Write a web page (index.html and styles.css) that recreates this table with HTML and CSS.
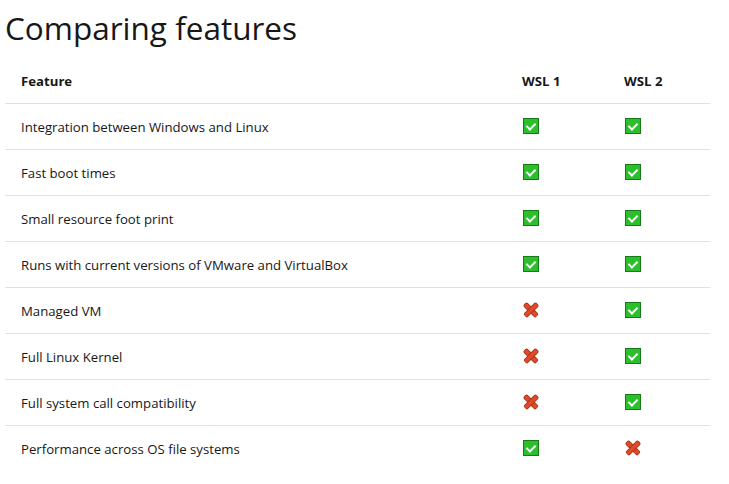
FILE: index.html
```html
<!DOCTYPE html>
<html>
<head>
<meta charset="utf-8">
<link rel="stylesheet" href="styles.css">
</head>
<body>
<h1 class="title">Comparing features</h1>
<table class="compare">
  <colgroup><col class="c-feature"><col class="c-wsl"><col class="c-wsl"></colgroup>
  <thead>
    <tr><th>Feature</th><th>WSL 1</th><th>WSL 2</th></tr>
  </thead>
  <tbody>
    <tr><td>Integration between Windows and Linux</td><td><span class="yes"></span></td><td><span class="yes"></span></td></tr>
    <tr><td>Fast boot times</td><td><span class="yes"></span></td><td><span class="yes"></span></td></tr>
    <tr><td>Small resource foot print</td><td><span class="yes"></span></td><td><span class="yes"></span></td></tr>
    <tr><td>Runs with current versions of VMware and VirtualBox</td><td><span class="yes"></span></td><td><span class="yes"></span></td></tr>
    <tr><td>Managed VM</td><td><span class="no"></span></td><td><span class="yes"></span></td></tr>
    <tr><td>Full Linux Kernel</td><td><span class="no"></span></td><td><span class="yes"></span></td></tr>
    <tr><td>Full system call compatibility</td><td><span class="no"></span></td><td><span class="yes"></span></td></tr>
    <tr><td>Performance across OS file systems</td><td><span class="yes"></span></td><td><span class="no"></span></td></tr>
  </tbody>
</table>
</body>
</html>
```
FILE: styles.css
```css
html, body { background: #ffffff; }
body {
  margin: 0;
  padding: 8px 5px 0 5px;
  font-family: "Open Sans", "Noto Sans", sans-serif;
  color: #171717;
}
.title {
  margin: 0 0 10px 0;
  font-size: 31.5px;
  line-height: 40px;
  font-weight: 400;
}
.compare {
  border-collapse: collapse;
  width: 705px;
  table-layout: fixed;
  font-size: 13.2px;
}
.c-feature { width: 501px; }
.c-wsl { width: 102px; }
.compare th, .compare td {
  text-align: left;
  padding: 0 16px;
  height: 45px;
  vertical-align: middle;
}
.compare th { font-weight: 700; }
.compare thead tr, .compare tbody tr { border-bottom: 1px solid #e1e1e1; }
.compare tbody tr:last-child { border-bottom: none; }
.yes, .no {
  display: inline-block;
  width: 16px;
  height: 16px;
  vertical-align: middle;
  margin-left: 1px;
  margin-top: -3px;
  position: relative;
  box-sizing: border-box;
}
.yes {
  background: #2cbf2c;
  border: 1px solid #167a16;
}
.yes::after {
  content: "";
  position: absolute;
  left: 4px;
  top: 2px;
  width: 4px;
  height: 7px;
  border-right: 2px solid #ffffff;
  border-bottom: 2px solid #ffffff;
  transform: rotate(45deg);
}
.no::before, .no::after {
  content: "";
  position: absolute;
  left: 0px;
  top: 6px;
  width: 16px;
  height: 3.5px;
  background: #dd4b2b;
  box-shadow: 0 0 0 0.7px #9c2d17;
  border-radius: 1px;
}
.no::before { transform: rotate(45deg); }
.no::after { transform: rotate(-45deg); }
```
